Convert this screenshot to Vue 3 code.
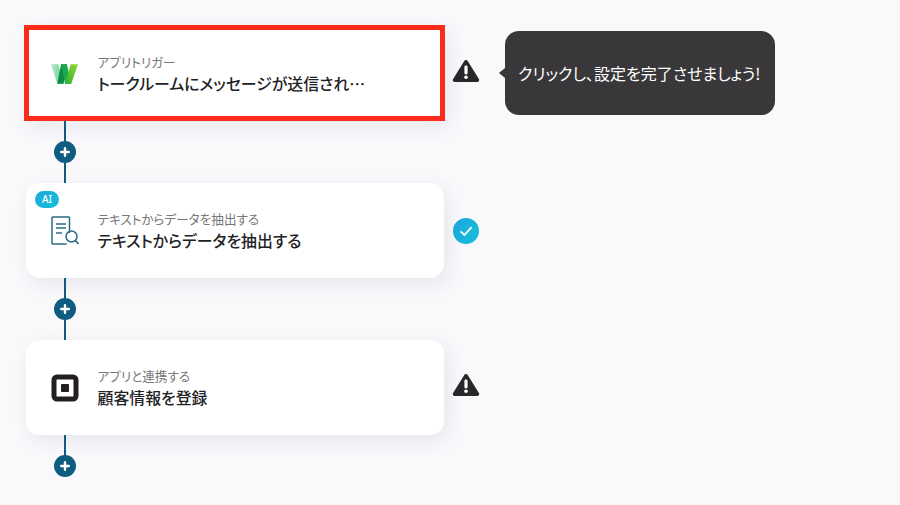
<template>
  <main class="flow">
    <template v-for="(step, index) in steps" :key="index">
      <section class="step">
        <div class="card" :class="{ selected: step.selected }">
          <span v-if="step.ai" class="ai-badge">AI</span>
          <div class="app-icon">
            <svg v-if="step.icon === 'w'" class="logo-w" width="27" height="22" viewBox="0 0 28 22">
              <defs>
                <linearGradient id="wLeft" x1="0" y1="0" x2="1" y2="0">
                  <stop offset="0" stop-color="#bdeacf" />
                  <stop offset="1" stop-color="#5bc98e" />
                </linearGradient>
                <linearGradient id="wRight" x1="0" y1="1" x2="1" y2="0">
                  <stop offset="0" stop-color="#2bb03a" />
                  <stop offset="1" stop-color="#97d92c" />
                </linearGradient>
              </defs>
              <path d="M0 1h7.5L13 21H6.5z" fill="url(#wLeft)" />
              <path d="M6.5 21L10.5 1h6L13 21z" fill="#0b8a40" />
              <path d="M10.5 1h6L21 21h-6.5z" fill="#1aa84a" />
              <path d="M14.5 21L20.5 1H28L21 21z" fill="url(#wRight)" />
            </svg>
            <svg v-else-if="step.icon === 'doc'" width="30" height="32" viewBox="0 0 30 32" fill="none" stroke="#2b6c85" stroke-width="1.5">
              <path d="M19.5 18V2.7a.7.7 0 0 0-.7-.7H2.7a.7.7 0 0 0-.7.7v25.6a.7.7 0 0 0 .7.7h14" />
              <path d="M6 9h10M6 13h10M6 18h6" stroke-width="1.3" />
              <circle cx="21.5" cy="21.5" r="5.5" />
              <path d="M25.5 25.5l3 3.5" stroke-width="1.7" />
            </svg>
            <svg v-else width="28" height="28" viewBox="0 0 28 28">
              <rect x="3" y="3" width="22" height="22" rx="3" fill="none" stroke="#231f20" stroke-width="5" />
              <rect x="10" y="10" width="8" height="8" rx="1" fill="#231f20" />
            </svg>
          </div>
          <div class="texts">
            <div class="label">{{ step.label }}</div>
            <div class="title">{{ step.title }}</div>
          </div>
        </div>

        <div class="status" :class="step.status">
          <svg v-if="step.status === 'warn'" width="28" height="24" viewBox="0 0 28 24">
            <path d="M14 3L2.8 21h22.4z" fill="#2a2729" stroke="#2a2729" stroke-width="4" stroke-linejoin="round" />
            <rect x="12.4" y="6.5" width="3.2" height="9" rx="1.4" fill="#fff" />
            <circle cx="14" cy="18.3" r="1.8" fill="#fff" />
          </svg>
          <svg v-else width="26" height="26" viewBox="0 0 26 26">
            <defs>
              <linearGradient id="okFill" x1="0" y1="0" x2="1" y2="1">
                <stop offset="0" stop-color="#1ea7df" />
                <stop offset="1" stop-color="#14c0d8" />
              </linearGradient>
            </defs>
            <circle cx="13" cy="13" r="13" fill="url(#okFill)" />
            <path d="M7.6 13.4l3.8 3.6L18.6 9.2" fill="none" stroke="#fff" stroke-width="1.8" />
          </svg>
        </div>

        <div v-if="step.hint" class="tooltip">{{ step.hint }}</div>
      </section>

      <div class="connector" :class="{ last: index === steps.length - 1 }">
        <span class="line"></span>
        <button class="add" type="button">
          <svg width="10" height="10" viewBox="0 0 10 10">
            <path d="M5 1.2v7.6M1.2 5h7.6" stroke="#fff" stroke-width="2.4" stroke-linecap="round" />
          </svg>
        </button>
      </div>
    </template>
  </main>
</template>

<script setup>
const steps = [
  {
    icon: 'w',
    label: 'アプリトリガー',
    title: 'トークルームにメッセージが送信され…',
    status: 'warn',
    selected: true,
    hint: 'クリックし、設定を完了させましょう!'
  },
  {
    icon: 'doc',
    label: 'テキストからデータを抽出する',
    title: 'テキストからデータを抽出する',
    status: 'ok',
    ai: true
  },
  {
    icon: 'square',
    label: 'アプリと連携する',
    title: '顧客情報を登録',
    status: 'warn'
  }
]
</script>

<style scoped>
.flow {
  width: 900px;
  height: 505px;
  box-sizing: border-box;
  padding: 26px 0 0 26px;
  overflow: hidden;
  background: #f9f8fb;
  font-family: "Noto Sans CJK JP", "Noto Sans", sans-serif;
  font-feature-settings: "palt";
}

.step {
  display: flex;
  align-items: center;
  height: 95px;
}

.card {
  position: relative;
  display: flex;
  align-items: center;
  box-sizing: border-box;
  width: 418px;
  height: 95px;
  padding-left: 24px;
  background: #fff;
  border-radius: 14px;
  box-shadow: 4px 6px 18px rgba(60, 60, 90, 0.09);
}

.card.selected {
  border-radius: 0;
}

.card.selected::after {
  content: "";
  position: absolute;
  top: -1px;
  left: -2px;
  right: -1px;
  bottom: 0;
  border: 5px solid #fb2b1c;
}

.ai-badge {
  position: absolute;
  top: 8px;
  left: 9px;
  width: 24px;
  height: 17px;
  border-radius: 9px;
  background: linear-gradient(135deg, #1ea7df, #14c0d8);
  color: #fff;
  font-family: "Noto Sans", sans-serif;
  font-size: 10px;
  font-weight: 500;
  line-height: 17px;
  text-align: center;
}

.app-icon {
  display: flex;
  justify-content: center;
  align-items: center;
  width: 30px;
  margin-right: 17px;
}

.logo-w {
  margin-right: 2px;
}

.label {
  color: #777;
  font-size: 12.6px;
  line-height: 16px;
}

.title {
  margin-top: 3px;
  color: #222226;
  font-size: 15.9px;
  font-weight: 500;
  line-height: 22px;
}

.texts {
  padding-top: 2px;
  padding-left: 0.5px;
}

.status {
  display: flex;
  justify-content: center;
  width: 44px;
}

.status.warn {
  margin-bottom: 6px;
}

.tooltip {
  position: relative;
  display: flex;
  align-items: center;
  box-sizing: border-box;
  width: 270px;
  height: 84px;
  margin-bottom: 1px;
  margin-left: 17px;
  padding-left: 13px;
  background: #39373a;
  border-radius: 14px;
  color: #fff;
  font-size: 16px;
  white-space: nowrap;
}

.tooltip::before {
  content: "";
  position: absolute;
  top: 37px;
  left: -6px;
  width: 10px;
  height: 10px;
  background: #39373a;
  clip-path: polygon(0 50%, 60% 0, 60% 100%);
}

.connector {
  position: relative;
  display: flex;
  justify-content: center;
  width: 22px;
  height: 62px;
  margin-left: 28px;
}

.connector.last .line {
  height: 30px;
}

.line {
  width: 2px;
  height: 100%;
  background: #0e5d80;
}

.add {
  position: absolute;
  top: 20px;
  left: 0;
  display: flex;
  justify-content: center;
  align-items: center;
  width: 22px;
  height: 22px;
  padding: 0;
  border: none;
  border-radius: 50%;
  background: #0e5d80;
}
</style>

<style>
html, body {
  margin: 0;
  background: #f9f8fb;
}
</style>
